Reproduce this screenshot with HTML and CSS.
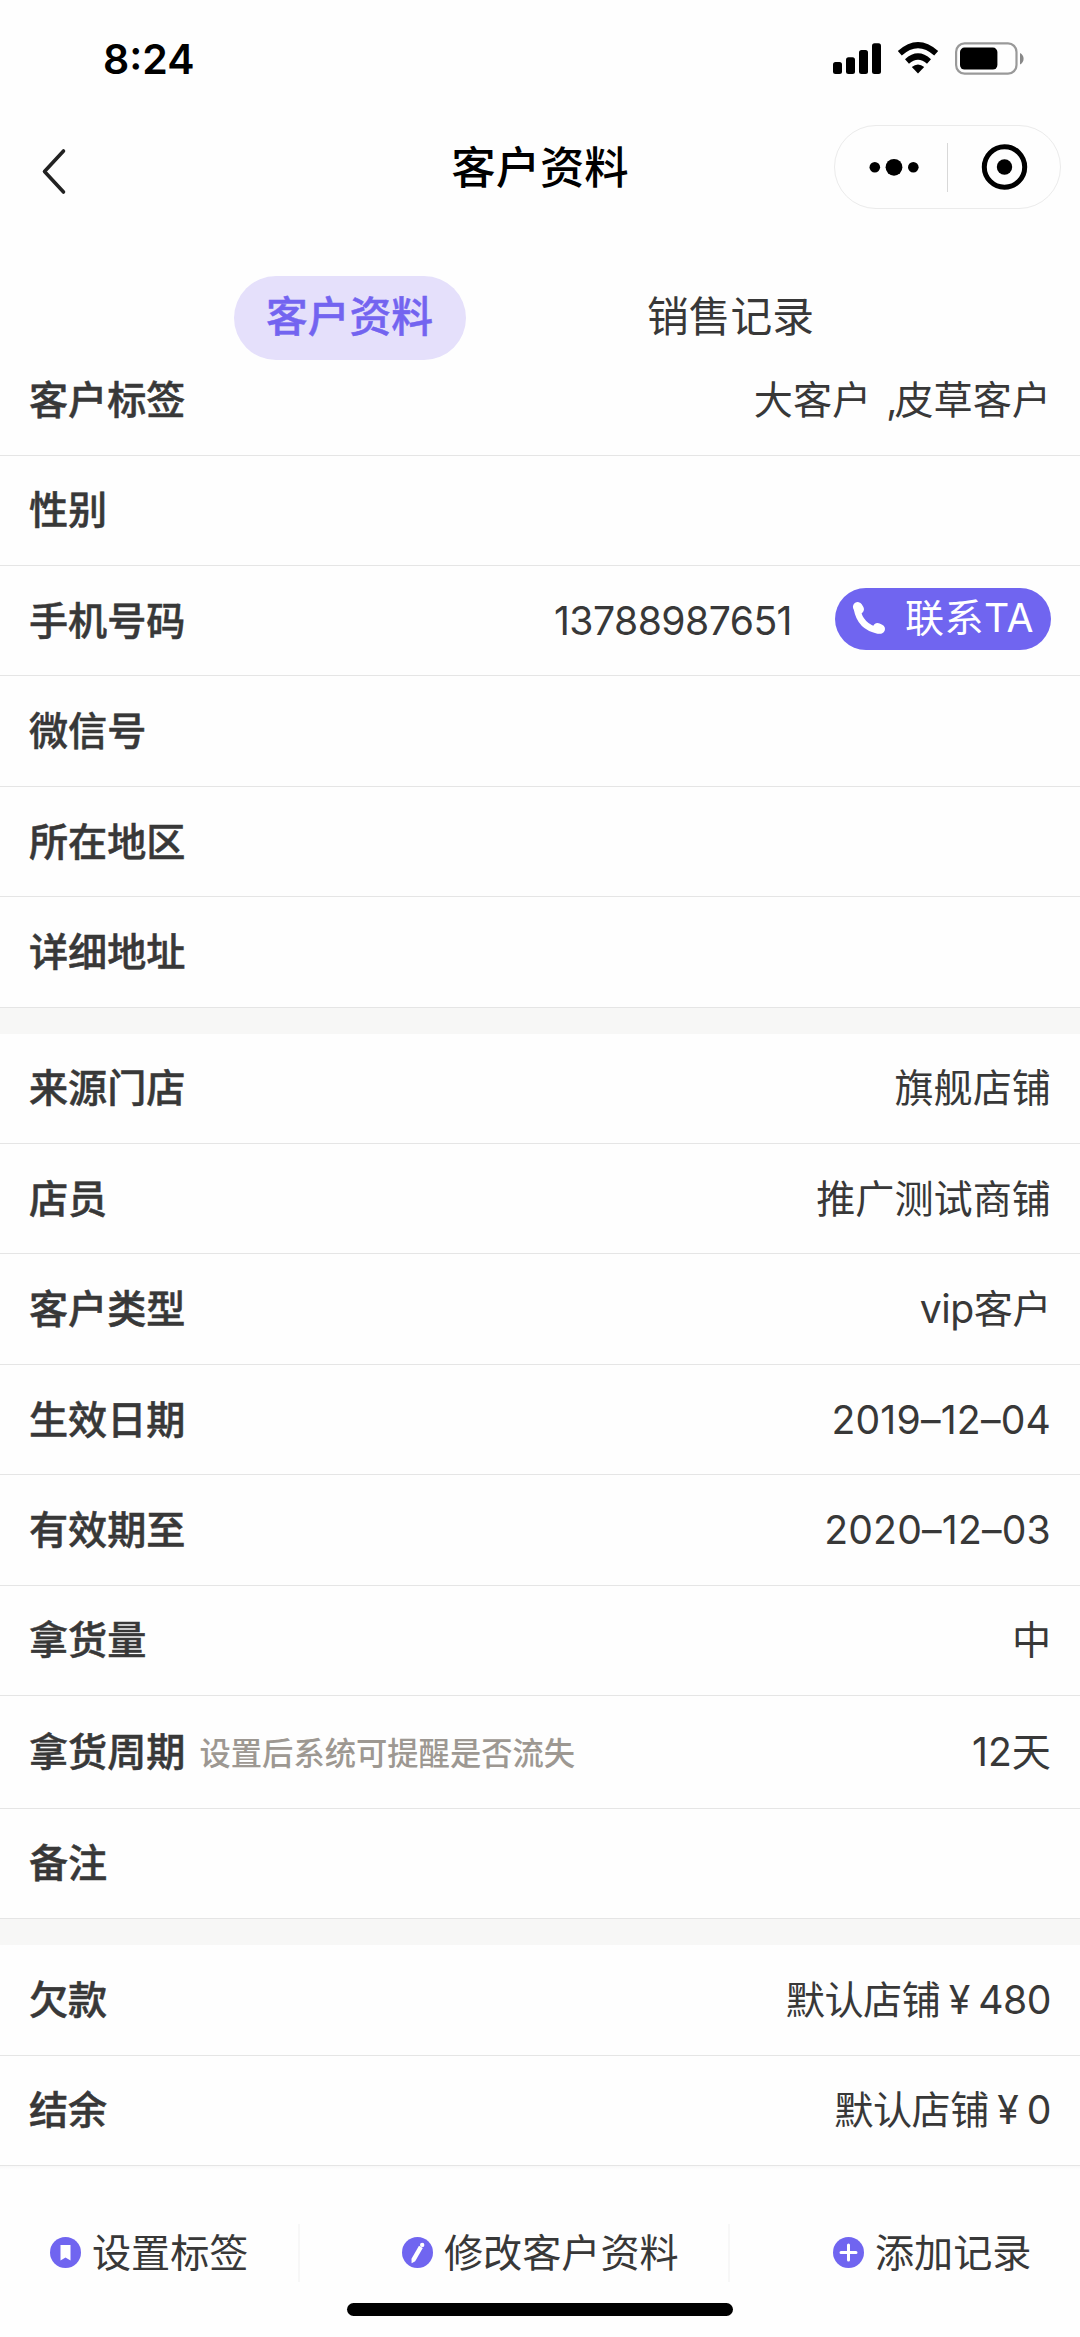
FILE: index.html
```html
<!DOCTYPE html>
<html lang="zh-CN">
<head>
<meta charset="utf-8">
<title>客户资料</title>
<link rel="stylesheet" href="styles.css">
</head>
<body>
<div class="screen">
  <header class="header">
    <div class="status">
      <span class="time">8:24</span>
      <svg class="status-icons" width="194" height="36" viewBox="831 40 194 36">
        <rect x="833" y="62" width="9" height="12" rx="2.5"/>
        <rect x="846" y="57.3" width="9" height="16.7" rx="2.5"/>
        <rect x="859" y="50" width="9" height="24" rx="2.5"/>
        <rect x="872" y="43.3" width="9" height="30.7" rx="2.5"/>
        <path class="wifi" d="M899.8 53.3Q918 37 936.2 53.3M907 61.4Q918 51.6 929 61.4"/>
        <path d="M911.8 67Q918 62 924.2 67L918 73.6Z"/>
        <rect class="battery" x="956.1" y="43.4" width="60.4" height="30.2" rx="8.5"/>
        <rect x="960" y="47.6" width="37.4" height="22" rx="4.5"/>
        <path class="nub" d="M1020 53Q1023.6 55 1023.6 58.7Q1023.6 62.5 1020 64.5Z"/>
      </svg>
    </div>
    <div class="nav">
      <svg class="back" width="28" height="48" viewBox="0 0 28 48"><path d="M22.5 4L3.5 24.5L22.5 45"/></svg>
      <h1 class="title">客户资料</h1>
      <div class="capsule">
        <svg class="more" width="112" height="82" viewBox="0 0 112 82"><circle cx="39.8" cy="41.3" r="5.3"/><circle cx="59" cy="41.3" r="8.4"/><circle cx="78.3" cy="41.3" r="5.3"/></svg>
        <i class="capsule-line"></i>
        <svg class="close" width="112" height="82" viewBox="0 0 112 82"><circle class="ring" cx="56.5" cy="41" r="20.2"/><circle cx="56.5" cy="41" r="7.7"/></svg>
      </div>
    </div>
    <nav class="tabs">
      <a class="tab active">客户资料</a>
      <a class="tab">销售记录</a>
    </nav>
  </header>
  <main class="content">
    <section class="group">
      <div class="row"><b class="label">客户标签</b><span class="value tags">大客户&nbsp;&nbsp;<span class="comma">,</span>皮草客户</span></div>
      <div class="row"><b class="label">性别</b></div>
      <div class="row"><b class="label">手机号码</b><span class="value phone">13788987651</span>
        <a class="contact"><svg width="34" height="34" viewBox="0 0 34 34"><path class="handset" d="M5 8C7 19 14 27 26 29.5"/><path class="ends" d="M5.7 5.8L7.2 8.2M25.6 26.8L28.2 28"/></svg>联系TA</a></div>
      <div class="row"><b class="label">微信号</b></div>
      <div class="row"><b class="label">所在地区</b></div>
      <div class="row"><b class="label">详细地址</b></div>
    </section>
    <section class="group">
      <div class="row"><b class="label">来源门店</b><span class="value">旗舰店铺</span></div>
      <div class="row"><b class="label">店员</b><span class="value">推广测试商铺</span></div>
      <div class="row"><b class="label">客户类型</b><span class="value latin">vip客户</span></div>
      <div class="row"><b class="label">生效日期</b><span class="value date">2019–12–04</span></div>
      <div class="row"><b class="label">有效期至</b><span class="value date">2020–12–03</span></div>
      <div class="row"><b class="label">拿货量</b><span class="value">中</span></div>
      <div class="row tall"><b class="label">拿货周期</b><span class="hint">设置后系统可提醒是否流失</span><span class="value">12天</span></div>
      <div class="row"><b class="label">备注</b></div>
    </section>
    <section class="group">
      <div class="row"><b class="label">欠款</b><span class="value money">默认店铺<span class="yen">¥</span>480</span></div>
      <div class="row"><b class="label">结余</b><span class="value money">默认店铺<span class="yen">¥</span>0</span></div>
    </section>
  </main>
  <footer class="footer">
    <div class="actions">
      <a class="action first"><svg width="31" height="31" viewBox="0 0 31 31"><circle cx="15.5" cy="15.5" r="15.5"/><path class="glyph" d="M10.5 8H20.5V23.5L15.5 20.5L10.5 23.5Z"/></svg>设置标签</a>
      <a class="action second"><svg width="31" height="31" viewBox="0 0 31 31"><circle cx="15.5" cy="15.5" r="15.5"/><path class="glyph" d="M17 8.8L20.8 11L13.2 24.2L9.6 26.2L9.5 21.8Z"/><circle class="glyph" cx="20.2" cy="7.9" r="2.2"/></svg>修改客户资料</a>
      <a class="action third"><svg width="31" height="31" viewBox="0 0 31 31"><circle cx="15.5" cy="15.5" r="15.5"/><path class="plus" d="M15.5 8V23M8 15.5H23"/></svg>添加记录</a>
    </div>
    <div class="home"></div>
  </footer>
</div>
</body>
</html>
```
FILE: styles.css
```css
* { box-sizing: border-box; }
body {
  margin: 0;
  background: #fefefe;
  color: #383838;
  font-family: Inter, "Noto Sans CJK SC", sans-serif;
  font-size: 39.13px;
}
svg { display: block; flex: none; }
.screen { width: 1080px; height: 2337px; display: flex; flex-direction: column; overflow: hidden; }

.header { height: 345.3px; flex: none; position: relative; z-index: 1; color: #000; }
.status { height: 125px; padding: 40px 55px 0 103px; display: flex; justify-content: space-between; }
.time { font-size: 41px; line-height: 38px; font-weight: 600; }
.battery { fill: none; stroke: #999; stroke-width: 2.2; }
.wifi { fill: none; stroke: #000; stroke-width: 6; }
.nub { fill: #888; }

.nav { height: 84px; padding: 0 19px 0 41px; display: grid; grid-template-columns: 227px 1fr 227px; align-items: center; }
.back { margin-top: 8px; }
.back path { fill: none; stroke: #222; stroke-width: 3.6; stroke-linecap: round; stroke-linejoin: round; }
.title { margin: 2px 0 0 -22px; text-align: center; font-size: 44.35px; line-height: 60px; font-weight: 500; }
.capsule { height: 84px; border: 1px solid #ebebeb; border-radius: 42px; display: flex; align-items: center; }
.capsule-line { width: 1px; height: 49px; background: #d8d8d8; }
.ring { fill: none; stroke: #000; stroke-width: 5; }

.tabs { display: flex; justify-content: center; gap: 149px; padding-top: 67px; }
.tab { width: 232px; height: 84px; line-height: 83px; border-radius: 42px; text-align: center; font-size: 41.74px; color: #383838; }
.tab.active { background: #e5e0fb; color: #7364f0; font-weight: 500; -webkit-text-stroke: 0.5px; }

.content { flex: none; }
.group + .group { border-top: 26.4px solid #f7f7f6; }
.row { height: 110.4px; padding: 0 29px; border-bottom: 1px solid #e5e5e5; display: flex; align-items: center; line-height: 56px; }
.row.tall { height: 112.8px; }
.label { font-weight: 500; -webkit-text-stroke: 0.5px; }
.value { margin-left: auto; }
.tags { word-spacing: -3.5px; }
.comma { margin-right: -3px; }
.phone { letter-spacing: -0.55px; }
.date { letter-spacing: 0.2px; }
.latin { letter-spacing: -0.5px; }
.money { letter-spacing: -0.5px; }
.yen { display: inline-block; width: 38px; text-align: center; }
.hint { margin: 5px 0 0 14px; font-size: 31.3px; font-weight: 500; color: #9d9892; }
.contact { width: 216px; height: 62px; margin: 0 0 4px 43px; padding: 0 0 1px 17px; display: flex; align-items: center; gap: 19px; border-radius: 31px; background: #7065f0; color: #fff; letter-spacing: 0.4px; }
.handset { fill: none; stroke: #fff; stroke-width: 6.5; stroke-linecap: round; }
.ends { fill: none; stroke: #fff; stroke-width: 9.5; stroke-linecap: round; }

.footer { flex: 1; background: linear-gradient(#f8f8f8, #fefefe 4px); display: flex; flex-direction: column; align-items: center; }
.actions { width: 1080px; height: 58px; margin-top: 58px; display: flex; line-height: 56px; }
.action { display: flex; align-items: center; gap: 11px; }
.action svg { fill: #7065f0; }
.action .glyph { fill: #fff; }
.action .plus { fill: none; stroke: #fff; stroke-width: 3; stroke-linecap: round; }
.first { width: 300px; padding-left: 50px; border-right: 2px solid #f7f7f7; }
.second { width: 430px; padding-left: 102px; border-right: 2px solid #f7f7f7; }
.third { padding-left: 103px; }
.home { width: 386px; height: 13px; margin-top: 21px; border-radius: 7px; background: #000; }
```
